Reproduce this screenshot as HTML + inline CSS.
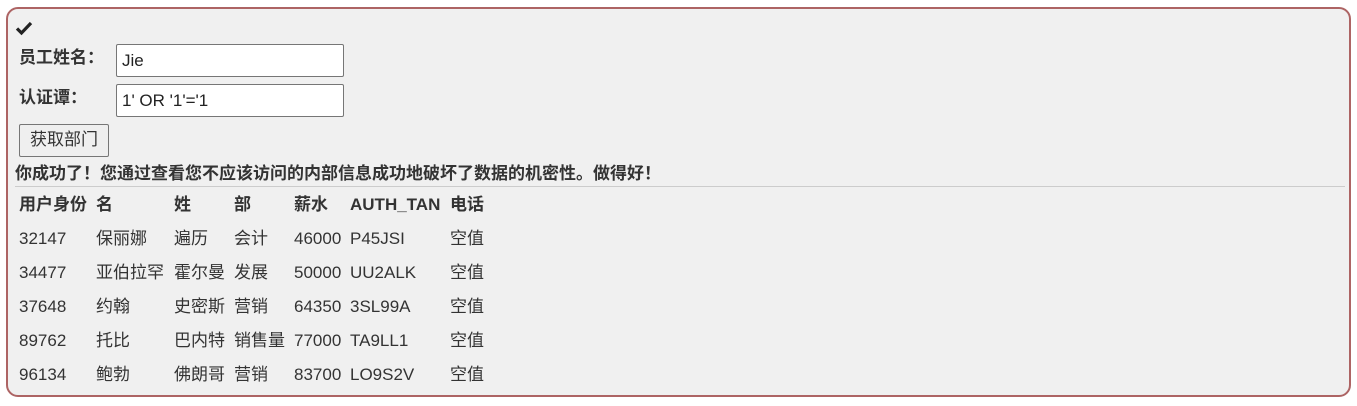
<!DOCTYPE html>
<html><head><meta charset="utf-8"><style>
body{margin:0;width:1357px;height:406px;background:#fff;font-family:"Liberation Sans","Noto Sans CJK SC",sans-serif;color:#333;font-size:17px;position:relative;overflow:hidden}
.box{position:absolute;left:6px;top:7px;width:1341px;height:386px;border:2px solid #ad6464;border-radius:12px;background:#f0f0f0}
.a{position:absolute;white-space:nowrap;line-height:20px}
.b{font-weight:bold}
.in{position:absolute;left:116px;border:1px solid #767676;border-radius:2px;background:#fff;box-sizing:border-box;width:228px;height:33px;padding-left:5px;line-height:31px;font-size:17px;color:#222}
.btn{position:absolute;left:19px;top:124px;width:90px;height:33px;box-sizing:border-box;border:1px solid #767676;border-radius:2px;background:#efefef;text-align:center;line-height:30px;font-size:17px;color:#333}
.hr{position:absolute;left:15px;top:186px;width:1330px;height:1px;background:#ccc}
</style></head><body>
<div class="box"></div>
<svg class="a" style="left:15px;top:20px" width="18" height="16" viewBox="0 0 18 16"><path d="M2 8.5 L6.5 13 L16 3" fill="none" stroke="#222" stroke-width="3.2"/></svg>
<div class="a b" style="left:19px;top:48px">员工姓名：</div>
<div class="in" style="top:44px">Jie</div>
<div class="a b" style="left:19px;top:88px">认证谭：</div>
<div class="in" style="top:84px">1' OR '1'='1</div>
<div class="btn">获取部门</div>
<div class="a b" style="left:15px;top:164px">你成功了！您通过查看您不应该访问的内部信息成功地破坏了数据的机密性。做得好！</div>
<div class="hr"></div>
<div class="a b" style="left:19px;top:195px">用户身份</div><div class="a b" style="left:96px;top:195px">名</div><div class="a b" style="left:174px;top:195px">姓</div><div class="a b" style="left:234px;top:195px">部</div><div class="a b" style="left:294px;top:195px">薪水</div><div class="a b" style="left:350px;top:195px">AUTH_TAN</div><div class="a b" style="left:450px;top:195px">电话</div>
<div class="a" style="left:19px;top:229px">32147</div><div class="a" style="left:96px;top:229px">保丽娜</div><div class="a" style="left:174px;top:229px">遍历</div><div class="a" style="left:234px;top:229px">会计</div><div class="a" style="left:294px;top:229px">46000</div><div class="a" style="left:350px;top:229px">P45JSI</div><div class="a" style="left:450px;top:229px">空值</div>
<div class="a" style="left:19px;top:263px">34477</div><div class="a" style="left:96px;top:263px">亚伯拉罕</div><div class="a" style="left:174px;top:263px">霍尔曼</div><div class="a" style="left:234px;top:263px">发展</div><div class="a" style="left:294px;top:263px">50000</div><div class="a" style="left:350px;top:263px">UU2ALK</div><div class="a" style="left:450px;top:263px">空值</div>
<div class="a" style="left:19px;top:297px">37648</div><div class="a" style="left:96px;top:297px">约翰</div><div class="a" style="left:174px;top:297px">史密斯</div><div class="a" style="left:234px;top:297px">营销</div><div class="a" style="left:294px;top:297px">64350</div><div class="a" style="left:350px;top:297px">3SL99A</div><div class="a" style="left:450px;top:297px">空值</div>
<div class="a" style="left:19px;top:331px">89762</div><div class="a" style="left:96px;top:331px">托比</div><div class="a" style="left:174px;top:331px">巴内特</div><div class="a" style="left:234px;top:331px">销售量</div><div class="a" style="left:294px;top:331px">77000</div><div class="a" style="left:350px;top:331px">TA9LL1</div><div class="a" style="left:450px;top:331px">空值</div>
<div class="a" style="left:19px;top:365px">96134</div><div class="a" style="left:96px;top:365px">鲍勃</div><div class="a" style="left:174px;top:365px">佛朗哥</div><div class="a" style="left:234px;top:365px">营销</div><div class="a" style="left:294px;top:365px">83700</div><div class="a" style="left:350px;top:365px">LO9S2V</div><div class="a" style="left:450px;top:365px">空值</div>
</body></html>
